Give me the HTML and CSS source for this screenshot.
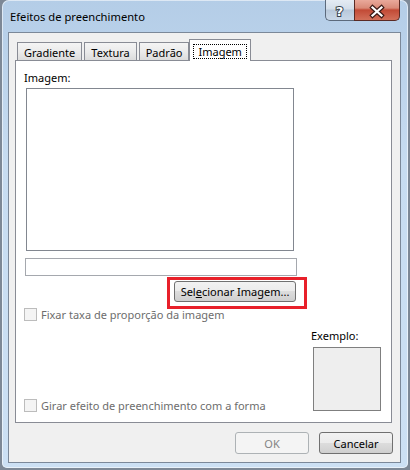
FILE: index.html
```html
<!DOCTYPE html>
<html lang="pt">

<head>
    <meta charset="UTF-8">
    <title>Efeitos de preenchimento</title>
    <link rel="stylesheet" href="styles.css">
</head>

<body>
    <div class="window">
        <div class="titlebar">
            <span class="title">Efeitos de preenchimento</span>
            <div class="caption-buttons">
                <span class="cap-btn help">
                    <svg width="29" height="21" viewBox="0 0 29 21">
                        <text x="14.5" y="17" text-anchor="middle" class="cap-glyph">?</text>
                    </svg>
                </span>
                <span class="cap-btn close">
                    <svg width="46" height="21" viewBox="0 0 46 21">
                        <path d="M18.5 8.5 L27.5 16.5 M27.5 8.5 L18.5 16.5" stroke="#3b1a16" stroke-width="4.5" stroke-linecap="square" />
                        <path d="M18.5 8.5 L27.5 16.5 M27.5 8.5 L18.5 16.5" stroke="#ffffff" stroke-width="2.2" stroke-linecap="square" />
                    </svg>
                </span>
            </div>
        </div>

        <div class="client">
            <div class="tabs">
                <span class="tab">Gradiente</span>
                <span class="tab">Textura</span>
                <span class="tab">Padrão</span>
                <span class="tab active"><span class="focus">Imagem</span></span>
            </div>

            <div class="panel">
                <div class="field-label">Imagem:</div>
                <div class="image-box"></div>
                <div class="path-field"></div>
                <div class="select-row">
                    <span class="highlight">
                        <button class="btn select-btn">Sel<u>e</u>cionar Imagem...</button>
                    </span>
                </div>
                <label class="check first-check">
                    <span class="box"></span>
                    Fixar taxa de proporção da imagem
                </label>

                <div class="lower">
                    <label class="check">
                        <span class="box"></span>
                        Girar efeito de preenchimento com a forma
                    </label>
                    <div class="example">
                        <div class="field-label">Exemplo:</div>
                        <div class="preview"></div>
                    </div>
                </div>
            </div>

            <div class="actions">
                <button class="btn" disabled>OK</button>
                <button class="btn">Cancelar</button>
            </div>
        </div>
    </div>
</body>

</html>
```

FILE: styles.css
```css
body {
    margin: 0;
    background-color: #7d8896;
    font-family: "Noto Sans", "Open Sans", sans-serif;
    font-size: 11px;
    color: #000000;
}

.window {
    margin-left: 2px;
    width: 406px;
    height: 468px;
    box-sizing: border-box;
    padding: 0 7px 5px 6px;
    display: flex;
    flex-direction: column;
    background: linear-gradient(180deg, #b4cde7 0, #c7dcf1 35%, #cce0f4 100%);
    border-radius: 7px 7px 5px 5px;
    box-shadow: inset 0 0 0 1px rgba(255, 255, 255, 0.55);
}

.titlebar {
    height: 32px;
    flex-shrink: 0;
    display: flex;
    justify-content: space-between;
    align-items: flex-start;
}

.title {
    padding: 9px 0 0 2px;
    line-height: 16px;
    font-size: 11.2px;
    color: #000000;
}

.caption-buttons {
    display: flex;
    margin-right: 1px;
}

.cap-btn {
    display: block;
    height: 21px;
    box-sizing: border-box;
    border: 1px solid #5c6a7c;
    border-top: none;
}

.cap-btn svg {
    display: block;
    margin: -1px 0 0 -1px;
}

.help {
    width: 29px;
    border-right: none;
    border-radius: 0 0 0 5px;
    background: linear-gradient(180deg, #e4ebf3 0, #d3dee9 45%, #b8c8da 50%, #c9d8e8 100%);
}

.close {
    width: 46px;
    border-color: #5a2a24;
    border-radius: 0 0 5px 0;
    background: linear-gradient(180deg, #e9a99b 0, #d98a78 40%, #c24a36 50%, #d2705a 100%);
}

.cap-glyph {
    font-family: "DejaVu Sans", sans-serif;
    font-weight: bold;
    font-size: 13px;
    fill: #ffffff;
    stroke: #343f4c;
    stroke-width: 2px;
    paint-order: stroke;
}

.client {
    flex: 1;
    display: flex;
    flex-direction: column;
    border: 1px solid #7b8899;
    background-color: #f0f0f0;
}

.tabs {
    height: 21px;
    margin: 6px 0 0 8px;
    display: flex;
    align-items: flex-end;
    position: relative;
    z-index: 1;
}

.tab {
    height: 18px;
    box-sizing: border-box;
    display: flex;
    align-items: center;
    padding: 1px 6px 0;
    margin-right: 2px;
    border: 1px solid #898c95;
    border-bottom: none;
    background: linear-gradient(180deg, #f4f4f4 0, #ebebeb 50%, #dcdcdc 100%);
    line-height: 15px;
}

.tab.active {
    height: 22px;
    margin: 0 0 -1px -2px;
    padding: 1px 3px 0;
    background: #ffffff;
}

.focus {
    padding: 0 4px;
    line-height: 13px;
    border: 1px dotted #000000;
}

.panel {
    height: 363px;
    box-sizing: border-box;
    margin: 0 8px 0 6px;
    padding: 9px 8px;
    display: flex;
    flex-direction: column;
    border: 1px solid #898c95;
    background-color: #ffffff;
}

.field-label {
    line-height: 15px;
}

.image-box {
    width: 268px;
    height: 163px;
    box-sizing: border-box;
    margin: 3px 0 0 2px;
    border: 1px solid #828790;
}

.path-field {
    width: 272px;
    height: 18px;
    box-sizing: border-box;
    margin: 7px 0 0 1px;
    border: 1px solid #a5a8ae;
}

.select-row {
    width: 272px;
    margin-top: 5px;
    display: flex;
    justify-content: flex-end;
}

.highlight {
    position: relative;
    display: block;
}

.highlight::after {
    content: "";
    position: absolute;
    left: -7px;
    top: -4px;
    right: -11px;
    bottom: -7px;
    border: 3px solid #e8202a;
}

.btn {
    width: 74px;
    height: 22px;
    padding: 0;
    font: inherit;
    color: #000000;
    border: 1px solid #707070;
    border-radius: 3px;
    background: linear-gradient(180deg, #f2f2f2 0, #ebebeb 50%, #dddddd 50%, #cfcfcf 100%);
}

.btn:disabled {
    color: #838383;
    border-color: #adb2b5;
    background: #f4f4f4;
}

.select-btn {
    width: 122px;
    height: 21px;
}

.check {
    display: flex;
    align-items: center;
    gap: 4px;
    line-height: 15px;
    color: #6d6d6d;
}

.first-check {
    margin-top: 5px;
}

.box {
    width: 13px;
    height: 13px;
    box-sizing: border-box;
    border: 1px solid #bcbcbc;
    background-color: #f4f4f4;
}

.lower {
    margin-top: auto;
    display: flex;
    justify-content: space-between;
    align-items: flex-end;
}

.example {
    width: 70px;
    margin: 0 2px 2px 0;
}

.preview {
    width: 68px;
    height: 64px;
    box-sizing: border-box;
    margin: 4px 0 0 2px;
    border: 1px solid #7f7f7f;
    background-color: #eeeeee;
}

.actions {
    display: flex;
    justify-content: flex-end;
    gap: 10px;
    padding: 9px 7px 0 0;
}
```
